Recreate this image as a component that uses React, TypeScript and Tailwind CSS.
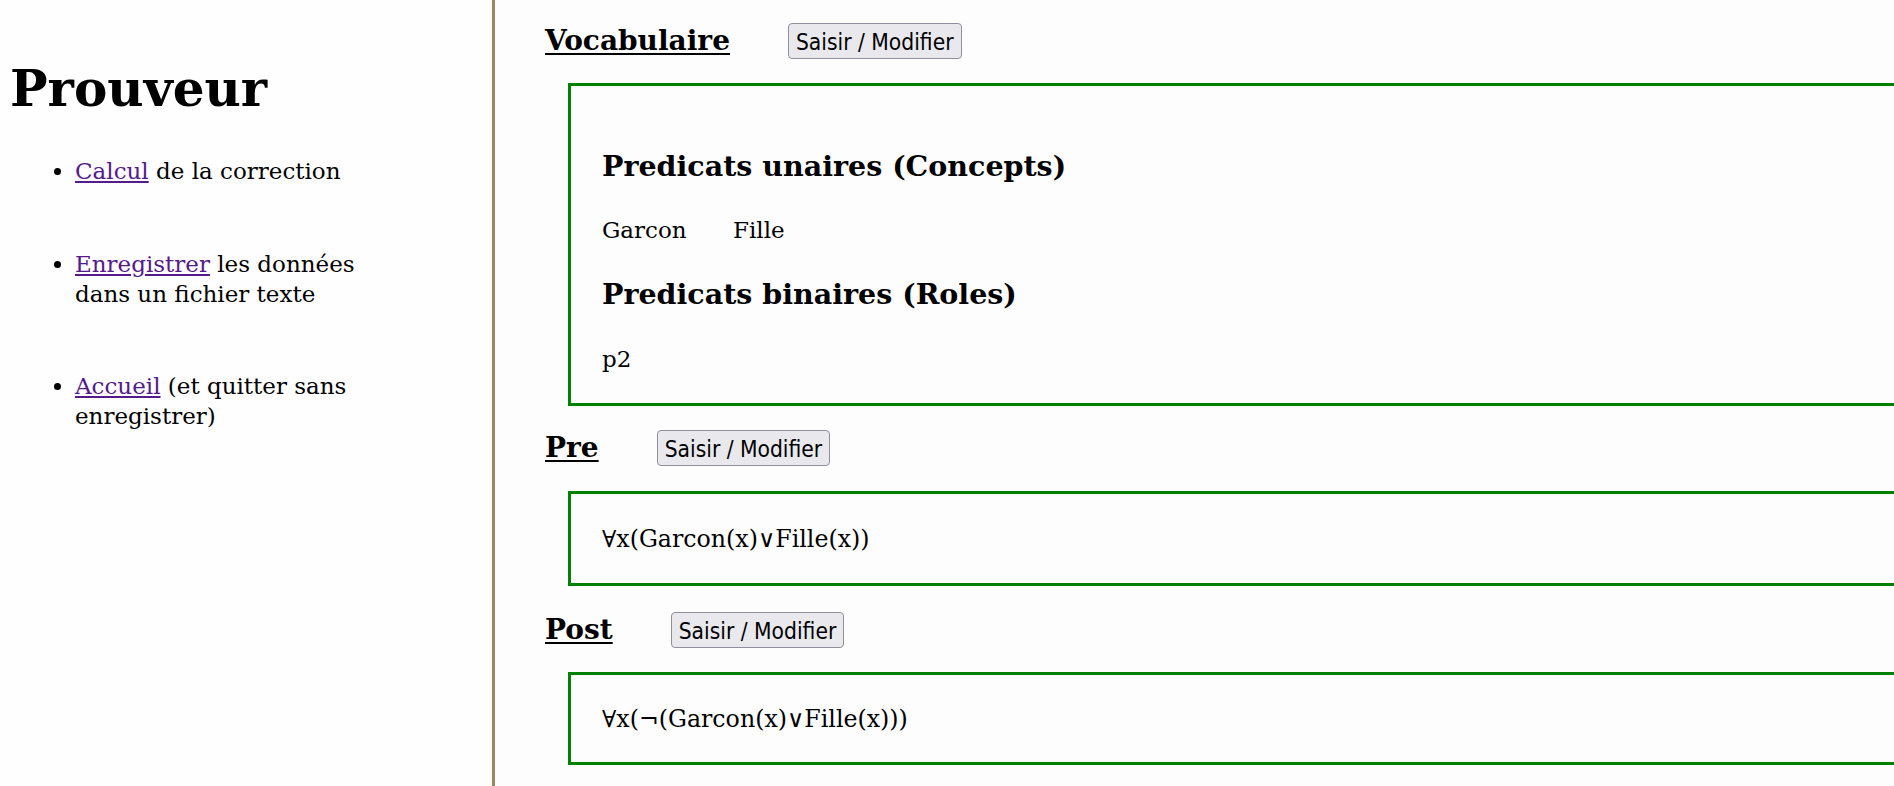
import React from 'react'

const serif = "font-['DejaVu_Serif',serif]"

function Section({
  title,
  className,
  children,
}: {
  title: string
  className?: string
  children: React.ReactNode
}) {
  return (
    <section>
      <div className={'flex items-baseline ' + (className ?? '')}>
        <h2 className={`${serif} text-[28px] leading-[30px] font-bold underline decoration-2 underline-offset-[3px]`}>
          {title}
        </h2>
        <button className="ml-[58px] h-[36px] px-[7px] pt-[1px] rounded-[4px] border border-[#8f8f9d] bg-[#e9e9ed] text-black text-[22.6px] leading-[26px] font-['DejaVu_Sans_Condensed','DejaVu_Sans',sans-serif] font-stretch-condensed">
          Saisir / Modifier
        </button>
      </div>
      {children}
    </section>
  )
}

export default function App() {
  return (
    <div className={`${serif} flex w-[1894px] min-h-[786px] overflow-hidden bg-white text-black`}>
      {/* Menu */}
      <aside className="w-[495px] shrink-0 border-r-[3px] border-[#9d8762] bg-[#fefefe]">
        <h1 className="pl-[10px] pt-[63px] text-[50px] leading-[52px] font-bold">Prouveur</h1>
        <ul className="list-disc pl-[75px] mt-[41px] text-[23px] leading-[30px]">
          <li>
            <a href="#" className="text-[#551a8b] underline">Calcul</a> de la correction
          </li>
          <li className="mt-[63px]">
            <a href="#" className="text-[#551a8b] underline">Enregistrer</a> les données
            <br />
            dans un fichier texte
          </li>
          <li className="mt-[62px]">
            <a href="#" className="text-[#551a8b] underline">Accueil</a> (et quitter sans
            <br />
            enregistrer)
          </li>
        </ul>
      </aside>

      {/* Contenu */}
      <main className="flex-1 pl-[50px] pt-[23px] bg-[#fdfdfd]">
        <Section title="Vocabulaire">
          <div className="ml-[23px] mt-[24px] w-[1500px] border-[3px] border-[#008000] pl-[31px] pt-[65px] pb-[29px]">
            <h3 className="text-[28.5px] leading-[30px] font-bold">Predicats unaires (Concepts)</h3>
            <p className="mt-[34px] text-[23px] leading-[30px]">
              <span className="inline-block w-[131px]">Garcon</span>
              <span>Fille</span>
            </p>
            <h3 className="mt-[34px] text-[28.5px] leading-[30px] font-bold">Predicats binaires (Roles)</h3>
            <p className="mt-[35px] text-[23px] leading-[30px]">p2</p>
          </div>
        </Section>

        <Section title="Pre" className="mt-[24px]">
          <div className="ml-[23px] mt-[25px] w-[1500px] border-[3px] border-[#008000] pl-[31px] pt-[30px] pb-[29px] text-[23.7px] leading-[30px]">
            ∀x(Garcon(x)∨Fille(x))
          </div>
        </Section>

        <Section title="Post" className="mt-[26px]">
          <div className="ml-[23px] mt-[24px] w-[1500px] border-[3px] border-[#008000] pl-[31px] pt-[29px] pb-[28px] text-[23.7px] leading-[30px]">
            ∀x(¬(Garcon(x)∨Fille(x)))
          </div>
        </Section>
      </main>
    </div>
  )
}
